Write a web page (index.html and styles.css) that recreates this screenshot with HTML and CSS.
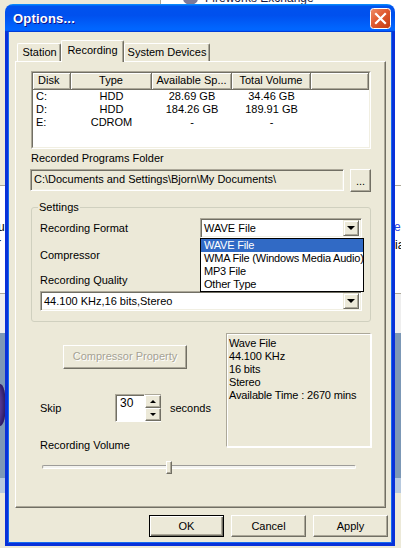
FILE: index.html
```html
<!DOCTYPE html>
<html>
<head>
<meta charset="UTF-8">
<title>Options...</title>
<link rel="stylesheet" href="styles.css">
</head>
<body>
<!-- desktop behind the dialog -->
<div class="desk desk-top"></div>
<div class="desk desk-top-line"></div>
<div class="desk desk-icon"></div>
<div class="desk desk-caption">Fireworks Exchange</div>
<div class="desk desk-band"></div>
<div class="desk desk-grey"></div>
<div class="desk desk-blue"></div>
<div class="desk desk-blob"></div>
<div class="desk desk-light"></div>
<div class="desk desk-txt desk-ui">ui</div>
<div class="desk desk-txt desk-r">r</div>
<div class="desk desk-txt desk-er">er</div>
<div class="desk desk-txt desk-ia">ia</div>

<div class="window">
	<div class="titlebar">
		<span class="title">Options...</span>
		<span class="close">
			<svg width="21" height="21" viewBox="0 0 21 21">
				<defs>
					<linearGradient id="cg" x1="0" y1="0" x2="1" y2="1">
						<stop offset="0" stop-color="#F0906A"/>
						<stop offset="0.45" stop-color="#E05A30"/>
						<stop offset="1" stop-color="#C23A10"/>
					</linearGradient>
				</defs>
				<rect x="0.5" y="0.5" width="20" height="20" rx="3" fill="url(#cg)" stroke="#fff"/>
				<path d="M6 6 L15 15 M15 6 L6 15" stroke="#fff" stroke-width="2.2" stroke-linecap="square"/>
			</svg>
		</span>
	</div>
	<div class="client">
		<div class="tabs">
			<div class="tab tab-station">Station</div>
			<div class="tab tab-active">Recording</div>
			<div class="tab tab-devices">System Devices</div>
		</div>
		<div class="panel">
			<!-- 磁盘列表 -->
			<div class="listview">
				<div class="lv-inner">
					<div class="lv-head">
						<div class="hc c-disk">Disk</div>
						<div class="hc c-type">Type</div>
						<div class="hc c-avail">Available Sp...</div>
						<div class="hc c-total">Total Volume</div>
						<div class="hc c-rest"></div>
					</div>
					<div class="lv-row">
						<div class="c-disk">C:</div><div class="c-type">HDD</div><div class="c-avail">28.69 GB</div><div class="c-total">34.46 GB</div>
					</div>
					<div class="lv-row">
						<div class="c-disk">D:</div><div class="c-type">HDD</div><div class="c-avail">184.26 GB</div><div class="c-total">189.91 GB</div>
					</div>
					<div class="lv-row">
						<div class="c-disk">E:</div><div class="c-type">CDROM</div><div class="c-avail">-</div><div class="c-total">-</div>
					</div>
				</div>
			</div>

			<div class="label folder-label">Recorded Programs Folder</div>
			<div class="folder-row">
				<div class="textbox">C:\Documents and Settings\Bjorn\My Documents\</div>
				<div class="btn btn-browse">...</div>
			</div>

			<!-- 设置 -->
			<fieldset class="settings">
				<legend>Settings</legend>
				<div class="set-row row-format">
					<span class="label">Recording Format</span>
					<div class="combo combo-format">
						<span class="combo-text">WAVE File</span>
						<span class="combo-btn"><i class="arrow-down"></i></span>
						<ul class="dropdown">
							<li class="sel">WAVE File</li>
							<li>WMA File (Windows Media Audio)</li>
							<li>MP3 File</li>
							<li>Other Type</li>
						</ul>
					</div>
				</div>
				<div class="set-row row-comp">
					<span class="label">Compressor</span>
				</div>
				<div class="label quality-label">Recording Quality</div>
				<div class="combo combo-quality">
					<span class="combo-text">44.100 KHz,16 bits,Stereo</span>
					<span class="combo-btn"><i class="arrow-down"></i></span>
				</div>
			</fieldset>

			<div class="lower">
				<div class="lower-left">
					<div class="btn btn-comp">Compressor Property</div>
					<div class="skip-row">
						<span class="label skip-label">Skip</span>
						<div class="spin">
							<div class="spin-edit">30</div>
							<div class="spin-btns">
								<div class="spin-btn"><i class="arrow-up"></i></div>
								<div class="spin-btn"><i class="arrow-down small"></i></div>
							</div>
						</div>
						<span class="label seconds">seconds</span>
					</div>
					<div class="label volume-label">Recording Volume</div>
				</div>
				<div class="info">
					<div>Wave File</div>
					<div>44.100 KHz</div>
					<div>16 bits</div>
					<div>Stereo</div>
					<div>Available Time : 2670 mins</div>
				</div>
			</div>

			<div class="slider">
				<div class="track"></div>
				<div class="thumb" style="left:124px"></div>
			</div>
		</div>

		<div class="buttons">
			<div class="btn btn-dlg btn-default">OK</div>
			<div class="btn btn-dlg">Cancel</div>
			<div class="btn btn-dlg">Apply</div>
		</div>
	</div>
</div>
</body>
</html>
```

FILE: styles.css
```css
*{
	margin:0;
	padding:0;
	box-sizing:border-box;
}
body{
	width:401px;
	height:548px;
	position:relative;
	overflow:hidden;
	background:#ECE9D8;
	font-family:"Liberation Sans",Arial,sans-serif;
	font-size:11px;
	line-height:13px;
	color:#000;
}
/* 背景桌面 */
.desk{
	position:absolute;
}
.desk-top{
	left:160px;
	top:0;
	width:241px;
	height:185px;
	background:#fff;
}
.desk-top-line{
	left:160px;
	top:0;
	width:1px;
	height:6px;
	background:#ACA899;
}
.desk-icon{
	left:183px;
	top:-8px;
	width:15px;
	height:13px;
	border-radius:50%;
	background:#7D7A9A;
}
.desk-caption{
	left:205px;
	top:-9px;
	font-size:12px;
	line-height:14px;
	color:#1A1A40;
}
.desk-band{
	left:0;
	top:185px;
	width:401px;
	height:109px;
	background:#fff;
	border-top:1px solid #ACA899;
	border-bottom:1px solid #ACA899;
}
.desk-grey{
	left:0;
	top:294px;
	width:401px;
	height:39px;
	background:#EEEEEE;
}
.desk-blue{
	left:0;
	top:333px;
	width:401px;
	height:145px;
	background:#7C98B6;
}
.desk-blob{
	left:-6px;
	top:384px;
	width:12px;
	height:42px;
	border-radius:50%;
	background:#5A3C96;
	box-shadow:inset -3px 0 4px #2A1A60;
}
.desk-light{
	left:0;
	top:478px;
	width:401px;
	height:15px;
	background:#B7C9DE;
}
.desk-txt{
	font-size:12px;
	line-height:14px;
}
.desk-ui{ left:-2px; top:220px; }
.desk-r{ left:-3px; top:236px; }
.desk-er{ left:394px; top:220px; color:#1F3FE0; }
.desk-ia{ left:395px; top:238px; }

/* 窗口 */
.window{
	position:absolute;
	left:5px;
	top:4px;
	width:390px;
	height:542px;
	display:flex;
	flex-direction:column;
}
.titlebar{
	height:28px;
	border-radius:8px 8px 0 0;
	background:linear-gradient(180deg,#0997ff,#0053ee 8%,#0050ee 40%,#06f 88%,#06f 93%,#005bff 95%,#003dd7 96%,#003dd7);
	display:flex;
	align-items:center;
	justify-content:space-between;
	padding:0 4px 0 8px;
}
.title{
	color:#fff;
	font-weight:bold;
	font-size:13px;
	text-shadow:1px 1px #0F1089;
	letter-spacing:0.2px;
}
.close{
	display:flex;
	margin-top:1px;
}
.client{
	flex:1;
	background:#ECE9D8;
	border:3px solid #0831D9;
	border-top:none;
	box-shadow:inset 1px 0 #166AEE,inset -1px 0 #166AEE,inset 0 -1px #166AEE;
	padding-top:8px;
}
/* 选项卡 */
.tabs{
	display:flex;
	align-items:flex-end;
	height:21px;
	margin-left:9px;
	position:relative;
	z-index:2;
}
.tab{
	height:18px;
	line-height:17px;
	text-align:center;
	background:#ECE9D8;
	border-top:1px solid #fff;
	border-left:1px solid #fff;
	border-right:1px solid #716F64;
	box-shadow:inset -1px 0 #ACA899;
	border-radius:2px 2px 0 0;
}
.tab-station{
	width:44px;
	padding-left:1px;
}
.tab-active{
	width:63px;
	height:22px;
	line-height:19px;
	margin-bottom:-1px;
}
.tab-devices{
	width:86px;
}
.panel{
	margin-left:7px;
	width:371px;
	height:447px;
	border:1px solid;
	border-color:#fff #716F64 #716F64 #fff;
	box-shadow:inset -1px -1px #ACA899;
}
/* 列表 */
.listview{
	margin:9px 0 0 15px;
	width:340px;
	height:78px;
	border:1px solid;
	border-color:#ACA899 #fff #fff #ACA899;
}
.lv-inner{
	height:100%;
	background:#fff;
	border:1px solid;
	border-color:#716F64 #F1EFE2 #F1EFE2 #716F64;
}
.lv-head,
.lv-row{
	display:flex;
}
.lv-head{
	height:17px;
}
.hc{
	height:17px;
	line-height:15px;
	background:#ECE9D8;
	border-right:1px solid #716F64;
	border-bottom:1px solid #716F64;
	box-shadow:inset 1px 1px #fff,inset -1px -1px #ACA899;
}
.lv-row{
	height:13px;
}
.c-disk{
	width:38px;
	padding-left:3px;
}
.hc.c-disk{
	padding-left:5px;
}
.c-type{
	width:81px;
	text-align:center;
}
.c-avail{
	width:80px;
	text-align:center;
}
.c-total{
	width:79px;
	text-align:center;
}
.c-rest{
	flex:1;
}
.folder-label{
	margin:3px 0 0 15px;
}
.folder-row{
	display:flex;
	margin:4px 0 0 14px;
}
.textbox{
	width:314px;
	height:22px;
	line-height:18px;
	border:1px solid;
	border-color:#ACA899 #fff #fff #ACA899;
	box-shadow:inset 1px 1px #716F64,inset -1px -1px #F1EFE2;
	padding-left:3px;
}
.btn{
	background:#ECE9D8;
	border:1px solid;
	border-color:#fff #716F64 #716F64 #fff;
	box-shadow:inset -1px -1px #ACA899;
	text-align:center;
}
.btn-browse{
	margin-left:6px;
	width:21px;
	height:23px;
	line-height:23px;
}
/* 设置分组 */
.settings{
	margin:9px 0 0 15px;
	width:340px;
	border:1px solid #D0D0BF;
	border-radius:3px;
	padding:0 8px 10px 8px;
}
.settings legend{
	margin-left:-2px;
	padding:0 1px;
	line-height:13px;
}
.set-row{
	display:flex;
	align-items:center;
	justify-content:space-between;
	height:20px;
}
.row-format{
	margin-top:4px;
	position:relative;
	z-index:3;
}
.row-comp{
	margin-top:7px;
}
.quality-label{
	margin-top:9px;
}
.combo{
	position:relative;
	height:20px;
	background:#fff;
	border:1px solid;
	border-color:#ACA899 #fff #fff #ACA899;
	box-shadow:inset 1px 1px #716F64,inset -1px -1px #F1EFE2;
	display:flex;
	align-items:center;
	justify-content:space-between;
	padding:0 2px 0 3px;
}
.combo-format{
	width:162px;
}
.combo-quality{
	margin-top:4px;
	width:322px;
}
.combo-btn{
	width:16px;
	height:16px;
	background:#ECE9D8;
	border:1px solid;
	border-color:#ECE9D8 #716F64 #716F64 #ECE9D8;
	box-shadow:inset 1px 1px #fff,inset -1px -1px #ACA899;
	display:flex;
	align-items:center;
	justify-content:center;
}
.arrow-down,
.arrow-up{
	width:0;
	height:0;
	border:4px solid transparent;
	border-top:4px solid #000;
	border-bottom:none;
}
.arrow-up{
	border-top:none;
	border-bottom:3px solid #000;
	border-left-width:3px;
	border-right-width:3px;
}
.arrow-down.small{
	border-top-width:3px;
	border-left-width:3px;
	border-right-width:3px;
}
.dropdown{
	position:absolute;
	left:-1px;
	top:19px;
	width:164px;
	height:54px;
	list-style:none;
	background:#fff;
	border:1px solid #000;
	letter-spacing:-0.2px;
}
.dropdown li{
	height:13px;
	line-height:13px;
	padding-left:3px;
	white-space:nowrap;
	overflow:hidden;
}
.dropdown li.sel{
	background:#316AC5;
	color:#fff;
}
/* 下半部分 */
.lower{
	display:flex;
	align-items:flex-start;
	margin:11px 0 0 24px;
}
.lower-left{
	width:186px;
}
.btn-comp{
	margin:12px 0 0 23px;
	width:124px;
	height:24px;
	line-height:21px;
	color:#A5A294;
	text-shadow:1px 1px #fff;
}
.skip-row{
	display:flex;
	align-items:center;
	height:28px;
	margin-top:25px;
}
.skip-label{
	width:75px;
}
.spin{
	display:flex;
	height:28px;
}
.spin-edit{
	width:30px;
	height:28px;
	background:#fff;
	border:1px solid;
	border-color:#ACA899 #fff #fff #ACA899;
	box-shadow:inset 1px 1px #716F64;
	padding:2px 0 0 4px;
	font-size:12px;
}
.spin-btns{
	display:flex;
	flex-direction:column;
	width:16px;
	border-bottom:1px solid #fff;
	border-top:1px solid #ACA899;
}
.spin-btn{
	flex:1;
	background:#ECE9D8;
	border:1px solid;
	border-color:#fff #716F64 #716F64 #fff;
	box-shadow:inset -1px -1px #ACA899;
	display:flex;
	align-items:center;
	justify-content:center;
}
.seconds{
	margin-left:9px;
}
.volume-label{
	margin-top:17px;
}
.info{
	width:145px;
	height:114px;
	border:1px solid;
	border-color:#ACA899 #fff #fff #ACA899;
	box-shadow:1px 1px #fff,inset 1px 1px #fff;
	padding:3px 0 0 2px;
	white-space:nowrap;
	letter-spacing:-0.15px;
}
.slider{
	position:relative;
	margin:9px 0 0 26px;
	width:314px;
	height:13px;
}
.track{
	position:absolute;
	left:0;
	right:0;
	top:4px;
	height:4px;
	border:1px solid;
	border-color:#9D9C99 #fff #fff #9D9C99;
	border-radius:2px;
	background:#F3F3EF;
}
.thumb{
	position:absolute;
	top:0;
	width:6px;
	height:13px;
	background:#ECE9D8;
	border:1px solid;
	border-color:#fff #716F64 #716F64 #fff;
	box-shadow:inset -1px -1px #ACA899;
}
/* 底部按钮 */
.buttons{
	display:flex;
	justify-content:flex-end;
	gap:7px;
	margin-top:7px;
	padding-right:4px;
}
.btn-dlg{
	width:75px;
	height:22px;
	line-height:20px;
}
.btn-default{
	border-color:#000;
	box-shadow:inset 1px 1px #fff,inset -1px -1px #716F64,inset -2px -2px #ACA899;
}
```
